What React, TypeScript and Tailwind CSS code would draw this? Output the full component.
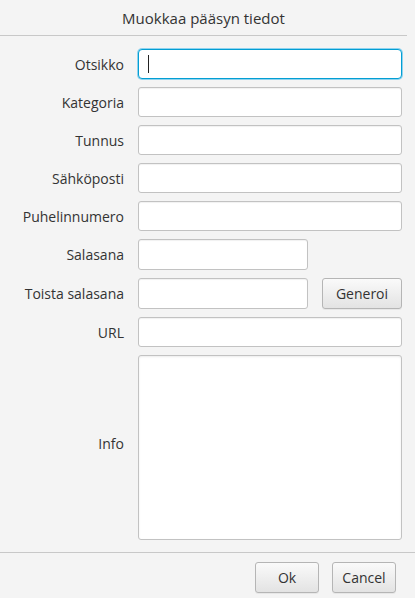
import React from "react";

const font = { fontFamily: '"Open Sans", "Noto Sans", "Liberation Sans", sans-serif' };

const inputCls =
  "h-[30px] rounded-[3px] border border-[#c2c2c2] bg-white shadow-[inset_0_1px_1px_rgba(0,0,0,0.06)] outline-none px-2 text-[14px] text-[#333]";

function Row({ label, children }: { label: string; children: React.ReactNode }) {
  return (
    <>
      <div className="flex items-center justify-end text-[14px] text-[#333]">{label}</div>
      <div className="flex items-center">{children}</div>
    </>
  );
}

const btnCls =
  "h-[31px] rounded-[3px] border border-[#b5b5b5] bg-gradient-to-b from-[#fafafa] to-[#e3e3e3] text-[14px] text-[#333] shadow-[0_1px_0_rgba(0,0,0,0.05)]";

export default function App() {
  return (
    <div className="w-[415px] h-[598px] bg-[#f4f4f4] flex flex-col" style={font}>
      <div className="h-[36px] w-[407px] border-b border-[#c8c8c8] flex items-center justify-center text-[15px] text-[#333] pt-[1px]">
        Muokkaa pääsyn tiedot
      </div>
      <div className="flex-1 pt-[13px] pl-[14px] pr-[13px]">
        <div className="grid grid-cols-[110px_264px] gap-x-[14px] gap-y-[8px]">
          <Row label="Otsikko">
            <div className="w-full h-[30px] rounded-[4px] border border-[#039ed3] shadow-[0_0_0_1px_#8fd3ef] bg-white flex items-center pl-[9px]">
              <div className="w-[1px] h-[18px] bg-[#222]" />
            </div>
          </Row>
          <Row label="Kategoria">
            <div className={inputCls + " w-full"} />
          </Row>
          <Row label="Tunnus">
            <div className={inputCls + " w-full"} />
          </Row>
          <Row label="Sähköposti">
            <div className={inputCls + " w-full"} />
          </Row>
          <Row label="Puhelinnumero">
            <div className={inputCls + " w-full"} />
          </Row>
          <Row label="Salasana">
            <div className={inputCls + " w-[170px] h-[31px]"} />
          </Row>
          <Row label="Toista salasana">
            <div className="flex w-full items-center justify-between">
              <div className={inputCls + " w-[170px] h-[31px]"} />
              <button className={btnCls + " w-[80px]"}>Generoi</button>
            </div>
          </Row>
          <Row label="URL">
            <div className={inputCls + " w-full"} />
          </Row>
          <div className="flex items-center justify-end text-[14px] text-[#333] pb-[8px]">Info</div>
          <div className={"w-full h-[185px] rounded-[3px] border border-[#c2c2c2] bg-white shadow-[inset_0_1px_2px_rgba(0,0,0,0.08)]"} />
        </div>
      </div>
      <div className="h-[46px] border-t border-[#c8c8c8] flex items-start justify-end gap-[13px] pr-[19px] pt-[9px]">
        <button className={btnCls + " w-[64px]"}>Ok</button>
        <button className={btnCls + " w-[64px]"}>Cancel</button>
      </div>
    </div>
  );
}
